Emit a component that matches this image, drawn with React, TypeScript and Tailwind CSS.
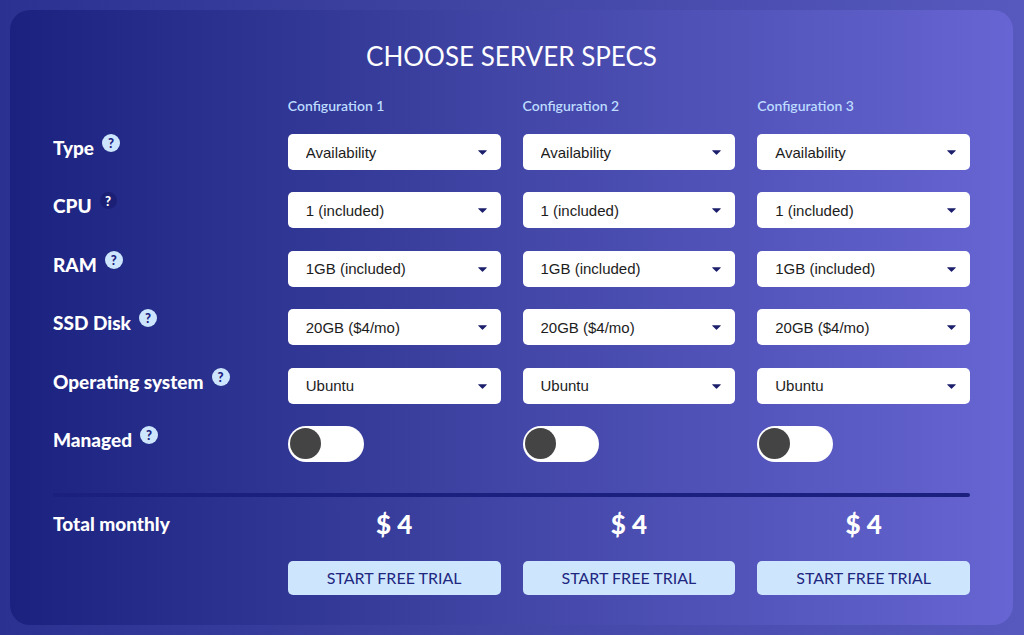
import React from "react";

const configurations = ["Configuration 1", "Configuration 2", "Configuration 3"];

const specs = [
  { id: "type", label: "Type", value: "Availability", active: false },
  { id: "cpu", label: "CPU", value: "1 (included)", active: true },
  { id: "ram", label: "RAM", value: "1GB (included)", active: false },
  { id: "disk", label: "SSD Disk", value: "20GB ($4/mo)", active: false },
  { id: "os", label: "Operating system", value: "Ubuntu", active: false },
];

function RowLabel({ id, label, active }: { id: string; label: string; active: boolean }) {
  return (
    <div className="flex items-start gap-2">
      <span id={id} className="pt-0.5 text-[19px] leading-6 font-black whitespace-nowrap text-white">
        {label}
      </span>
      <button
        type="button"
        aria-label={`About ${label}`}
        className={
          active
            ? "flex size-[17px] shrink-0 items-center justify-center rounded-full bg-[#1b1f75] text-[13px] leading-4 font-black text-white"
            : "flex size-[18px] shrink-0 items-center justify-center rounded-full bg-[#cde6fd] text-[13px] leading-4 font-black text-[#1c217d]"
        }
      >
        ?
      </button>
    </div>
  );
}

function SpecSelect({ value, labelledBy }: { value: string; labelledBy: string }) {
  return (
    <div className="relative">
      <select
        aria-labelledby={labelledBy}
        className="h-9 w-full appearance-none rounded-[5px] bg-white px-[18px] pt-px font-['Liberation_Sans',sans-serif] text-[15px] leading-5 text-[#1c1c1c]"
      >
        <option>{value}</option>
      </select>
      <svg
        aria-hidden="true"
        viewBox="0 0 10 5"
        className="pointer-events-none absolute top-4 right-[14px] h-[5px] w-[9px] fill-[#1c1f6c]"
      >
        <path d="M0.4 0H9.6Q10 0.4 9.5 0.8L5.5 4.8Q5 5.2 4.5 4.8L0.5 0.8Q0 0.4 0.4 0Z" />
      </svg>
    </div>
  );
}

export default function App() {
  return (
    <main className="flex min-h-screen flex-col bg-linear-to-r from-[#2a3190] via-[#4246a5] to-[#5759be] py-2.5 pr-[11px] pl-2.5 font-['Lato',sans-serif]">
      <section className="flex flex-1 flex-col rounded-[20px] bg-linear-to-r from-[#1b217e] via-[#4246a6] to-[#6765d3] px-[43px] pt-[30px] pb-[30px]">
        <h1 className="text-center text-[26px] leading-8 text-white">CHOOSE SERVER SPECS</h1>

        <div className="mt-6 grid grid-cols-4 gap-[22px]">
          {configurations.map((name, i) => (
            <h2
              key={name}
              id={`config-${i}`}
              className={
                i === 0
                  ? "col-start-2 text-sm leading-5 font-semibold text-[#bddcff]"
                  : "text-sm leading-5 font-semibold text-[#bddcff]"
              }
            >
              {name}
            </h2>
          ))}
        </div>

        <div className="mt-[18px] flex flex-1 flex-col justify-between gap-2">
          {specs.map((spec) => (
            <div key={spec.id} className="grid grid-cols-4 gap-[22px]">
              <RowLabel id={spec.id} label={spec.label} active={spec.active} />
              {configurations.map((name, i) => (
                <SpecSelect key={name} value={spec.value} labelledBy={`${spec.id} config-${i}`} />
              ))}
            </div>
          ))}
          <div className="grid grid-cols-4 gap-[22px]">
            <RowLabel id="managed" label="Managed" active={false} />
            {configurations.map((name, i) => (
              <input
                key={name}
                type="checkbox"
                role="switch"
                aria-labelledby={`managed config-${i}`}
                className="flex h-9 w-[76px] cursor-pointer appearance-none items-center rounded-full bg-white px-[2px] before:size-[31px] before:rounded-full before:bg-[#444444] before:content-[''] checked:justify-end checked:before:bg-[#1c217d]"
              />
            ))}
          </div>
        </div>

        <hr className="mt-[31px] h-1 rounded-full border-0 bg-[#1b1f7d]" />

        <div className="mt-[11px] grid grid-cols-4 items-center gap-[22px] text-white">
          <span className="text-[19px] leading-8 font-black">Total monthly</span>
          {configurations.map((name) => (
            <strong key={name} className="text-center text-[26px] leading-8 font-black">
              $ 4
            </strong>
          ))}
        </div>

        <div className="mt-[21px] grid grid-cols-4 gap-[22px]">
          {configurations.map((name, i) => (
            <button
              key={name}
              type="button"
              aria-describedby={`config-${i}`}
              className={
                i === 0
                  ? "col-start-2 h-[34px] rounded-[5px] bg-[#cde6fd] text-base leading-5 text-[#1f2780]"
                  : "h-[34px] rounded-[5px] bg-[#cde6fd] text-base leading-5 text-[#1f2780]"
              }
            >
              START FREE TRIAL
            </button>
          ))}
        </div>
      </section>
    </main>
  );
}
